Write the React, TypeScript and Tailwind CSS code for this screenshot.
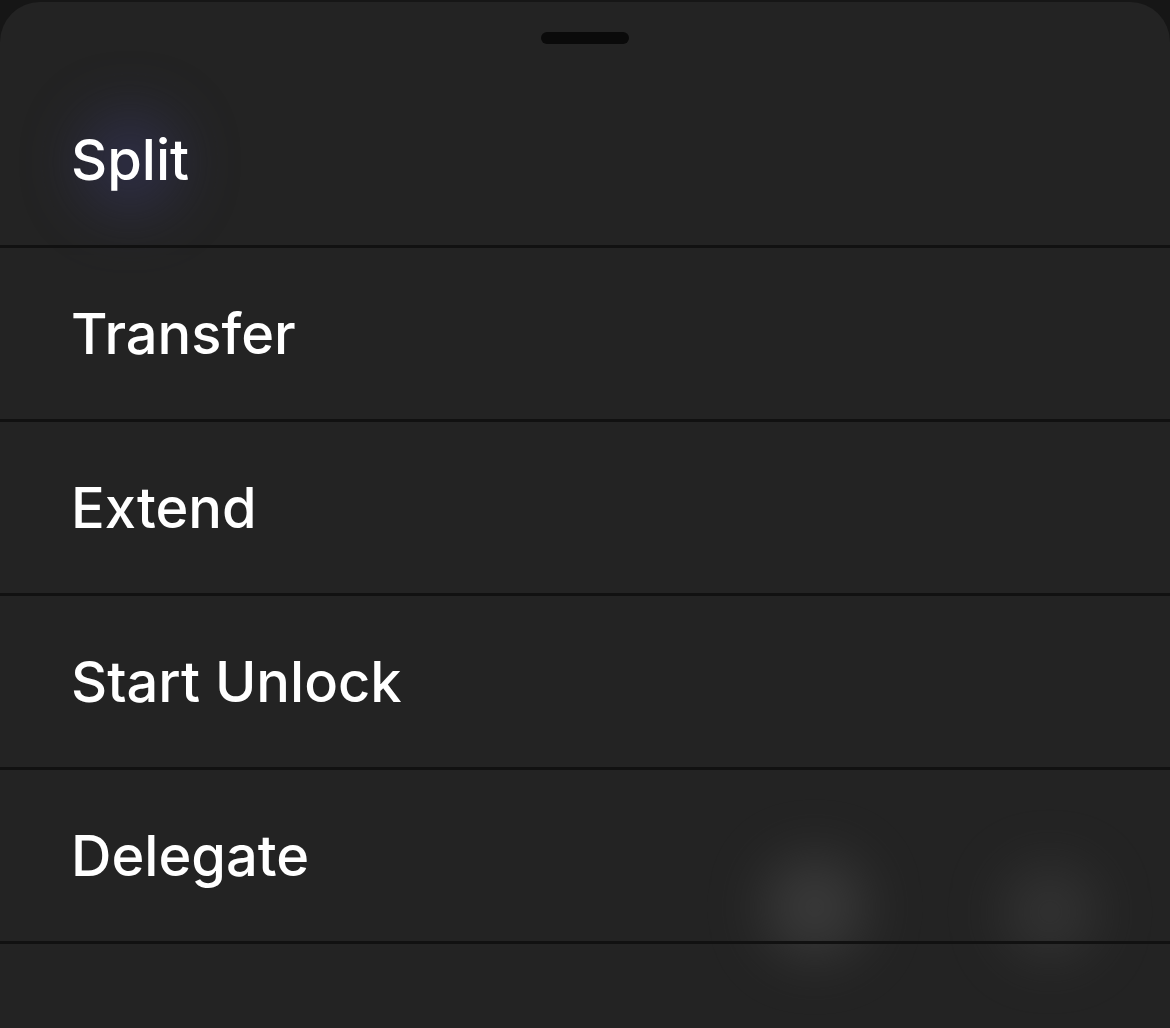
const ACTIONS = ["Split", "Transfer", "Extend", "Start Unlock", "Delegate"];

export default function App() {
  return (
    <div className="h-[1028px] w-[1170px] overflow-hidden bg-[#161616] pt-[2px]">
      <div
        className="relative flex h-[1026px] flex-col overflow-hidden rounded-t-[40px] bg-[#232323] text-white"
        style={{ fontFamily: "Inter, 'Noto Sans', sans-serif" }}
      >
        {/* blurred glows from content behind the sheet */}
        <div className="pointer-events-none absolute left-[80px] top-[110px] h-[100px] w-[100px] rounded-full bg-[#3a3a6a] opacity-50 blur-[30px]" />
        <div className="pointer-events-none absolute left-[765px] top-[855px] h-[100px] w-[100px] rounded-full bg-[#4a4a4a] opacity-60 blur-[28px]" />
        <div className="pointer-events-none absolute left-[1005px] top-[865px] h-[90px] w-[90px] rounded-full bg-[#444444] opacity-50 blur-[28px]" />

        <div className="relative flex h-[72px] shrink-0 justify-center pt-[30px]">
          <div className="h-[12px] w-[88px] rounded-full bg-[#0a0a0a]" />
        </div>

        {ACTIONS.map((label) => (
          <button
            key={label}
            className="relative flex h-[174px] shrink-0 items-center border-b-[3px] border-[#111111] pl-[71px] text-left text-[56px] font-medium"
          >
            {label}
          </button>
        ))}
      </div>
    </div>
  );
}
